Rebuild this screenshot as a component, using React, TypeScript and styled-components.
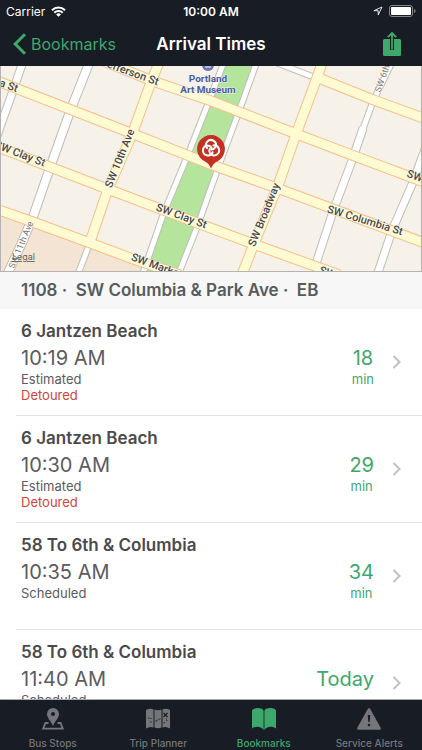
import React from "react";
import styled, { createGlobalStyle } from "styled-components";

const color = {
  bar: "#181c24",
  green: "#3ea76c",
  red: "#d0443c",
  muted: "#757679",
};

const GlobalStyle = createGlobalStyle`
  * { box-sizing: border-box; }
  body { margin: 0; background: #fff; font-family: Inter, "Liberation Sans", sans-serif; }
  h1, h2, p, ul { margin: 0; padding: 0; }
  button { font-family: inherit; }
`;

const Screen = styled.div`
  display: flex;
  flex-direction: column;
  height: 100vh;
  overflow: hidden;
`;

const TopBar = styled.header`
  flex: none;
  background: ${color.bar};
  color: #fff;
`;

const ThreeColumns = styled.div`
  display: grid;
  grid-template-columns: 1fr auto 1fr;
  align-items: center;
`;

const StatusBar = styled(ThreeColumns)`
  height: 22px;
  padding: 0 6px;
  font-size: 12px;
`;

const Cluster = styled.div<{ $end?: boolean }>`
  display: flex;
  align-items: center;
  gap: 6px;
  justify-content: ${(p) => (p.$end ? "flex-end" : "flex-start")};
`;

const Clock = styled.time`
  font-weight: 600;
`;

const NavBar = styled(ThreeColumns)`
  height: 44px;
  padding: 0 12px;
`;

const Title = styled.h1`
  font-size: 17px;
  font-weight: 600;
  line-height: 20px;
`;

const BackLink = styled.a`
  display: flex;
  align-items: center;
  gap: 4px;
  color: ${color.green};
  font-size: 16px;
  line-height: 20px;
  text-decoration: none;
`;

const IconButton = styled.button`
  display: flex;
  justify-self: end;
  padding: 0 9px;
  border: 0;
  background: none;
  color: ${color.green};
`;

const MapPanel = styled.section`
  flex: none;
  height: 206px;
  overflow: hidden;
  background: #f6f1e9;
  border: solid #b5b3b1;
  border-width: 0 1px 1px;

  svg {
    display: block;
    width: 100%;
    height: 100%;
  }
`;

const StreetLabel = styled.text<{ $minor?: boolean }>`
  font-family: Roboto, sans-serif;
  font-size: ${(p) => (p.$minor ? 9 : 11)}px;
  font-weight: ${(p) => (p.$minor ? 400 : 500)};
  fill: ${(p) => (p.$minor ? "#77777b" : "#47474a")};
  stroke: #fffdf0;
  stroke-width: 1px;
  paint-order: stroke;
`;

const PlaceLabel = styled.text`
  font-family: Roboto, sans-serif;
  font-size: 10px;
  font-weight: 700;
  text-anchor: middle;
  fill: #4a5ca8;
  stroke: #f6f1e9;
  stroke-width: 1px;
  paint-order: stroke;
`;

const LegalText = styled.text`
  font-size: 9px;
  fill: #66625d;
  text-decoration: underline;
`;

const StopHeader = styled.h2`
  flex: none;
  padding: 0 21px;
  background: #f7f7f7;
  color: #555b5e;
  font-size: 17px;
  font-weight: 600;
  line-height: 37px;
  white-space: pre;
`;

const ArrivalList = styled.ul`
  flex: 1;
  min-height: 0;
  overflow-y: auto;
  scrollbar-width: none;
  list-style: none;
`;

const ArrivalItem = styled.li`
  margin-left: 16px;
  border-bottom: 1px solid #e3e3e5;
`;

const ArrivalLink = styled.a`
  display: grid;
  grid-template-columns: 1fr auto 10px;
  grid-template-rows: 20px 1fr;
  column-gap: 18px;
  height: 106px;
  padding: 12px 20px 0 5px;
  color: #5b5b60;
  text-decoration: none;
`;

const RouteName = styled.span`
  grid-column: 1 / -1;
  color: #4a4a4c;
  font-size: 17px;
  font-weight: 600;
  line-height: 20px;
`;

const Stack = styled.span<{ $accent?: boolean }>`
  display: flex;
  flex-direction: column;
  padding-top: 5px;
  text-align: ${(p) => (p.$accent ? "center" : "left")};
  color: ${(p) => (p.$accent ? color.green : "inherit")};
`;

const BigText = styled.span`
  font-size: 20px;
  line-height: 25px;
`;

const SmallText = styled.span<{ $alert?: boolean }>`
  font-size: 13px;
  line-height: 16px;
  color: ${(p) => (p.$alert ? color.red : "inherit")};
`;

const Chevron = styled.svg`
  margin-top: 14px;
`;

const TabBar = styled.nav`
  flex: none;
  display: grid;
  grid-template-columns: repeat(4, 1fr);
  height: 51px;
  border-top: 1px solid #a9abae;
  background: ${color.bar};
`;

const Tab = styled.button<{ $active?: boolean }>`
  display: flex;
  flex-direction: column;
  align-items: center;
  gap: 6px;
  padding: 8px 0 0;
  border: 0;
  background: none;
  color: ${(p) => (p.$active ? color.green : color.muted)};
  font-size: 10px;
  font-weight: 500;
  line-height: 14px;
`;

const WifiIcon = () => (
  <svg width="15" height="11" viewBox="0 0 15 11" fill="none" stroke="#fff" strokeWidth="2">
    <path d="M1 4.2a9.3 9.3 0 0 1 13 0M3.3 6.7a6 6 0 0 1 8.4 0" />
    <path d="M7.5 10.8 5.1 8.4a3.4 3.4 0 0 1 4.8 0z" fill="#fff" stroke="none" />
  </svg>
);

const LocationIcon = () => (
  <svg width="10" height="10" viewBox="0 0 10 10" fill="none" stroke="#e8e8e9" strokeLinejoin="round">
    <path d="M9 1 .9 4.7h4.3V9z" />
  </svg>
);

const BatteryIcon = () => (
  <svg width="27" height="12" viewBox="0 0 27 12">
    <rect x=".5" y=".5" width="23" height="11" rx="2.5" fill="none" stroke="#85878b" />
    <rect x="2" y="2" width="20" height="8" rx="1" fill="#fff" />
    <path d="M25 4v4q1.5-.6 1.5-2T25 4" fill="#85878b" />
  </svg>
);

const BackIcon = () => (
  <svg width="15" height="22" viewBox="0 0 15 22" fill="none" stroke="currentColor" strokeWidth="3">
    <path d="M13 1.2 3.2 11 13 20.8" />
  </svg>
);

const ShareIcon = () => (
  <svg width="18" height="24" viewBox="0 0 18 24">
    <rect y="7" width="18" height="17" rx="1.5" fill="currentColor" />
    <path d="M9 7v11" stroke={color.bar} strokeWidth="4" />
    <path d="M9 1v16.5M4.8 5.2 9 1l4.2 4.2" fill="none" stroke="currentColor" strokeWidth="1.8" />
  </svg>
);

const StopIcon = () => (
  <svg width="22" height="22" viewBox="0 0 22 22" fill="currentColor">
    <path fillRule="evenodd" d="M11 0a6 6 0 0 1 6 6c0 4-4 7-6 12C9 13 5 10 5 6a6 6 0 0 1 6-6m0 4a2 2 0 1 0 0 4 2 2 0 0 0 0-4" />
    <path d="M6.5 15H3.4L1.2 20.7h19.6L18.6 15h-3.1" fill="none" stroke="currentColor" strokeWidth="1.8" />
  </svg>
);

const TripIcon = () => (
  <svg width="24" height="22" viewBox="0 0 24 22">
    <path d="M0 2q4-2 7.5-.5v18Q4 18 0 20.5zM8.500 1.500q3.500 1.400 7 0v18q-3.500 1.500-7 0zM16.500 1.500Q20 0 24 2v18.500Q20 18 16.500 19.500z" fill="currentColor" />
    <path d="M2 10h2M4 14h2M5 10v1M9.500 13h2l1-2h2M17.500 15l2-1M21 13l-1-3" fill="none" stroke={color.bar} strokeDasharray="1.500 1" />
    <path d="m17.500 5 4 4M21.500 5l-4 4" stroke={color.bar} strokeWidth="1.200" />
  </svg>
);

const BookIcon = () => (
  <svg width="24" height="22" viewBox="0 0 24 22" fill="currentColor">
    <path d="M0 3C0 0 9-1.500 11.600 2.500V22C9 18 3 18 0 20.500zM24 3C24 0 15-1.500 12.400 2.500V22C15 18 21 18 24 20.500z" />
  </svg>
);

const AlertIcon = () => (
  <svg width="24" height="22" viewBox="0 0 24 22">
    <path d="M12 1.500 22.500 20.500h-21z" fill="currentColor" stroke="currentColor" strokeWidth="2.600" strokeLinejoin="round" />
    <path d="M10.800 7h2.400l-.5 7h-1.400z" fill={color.bar} />
    <circle cx="12" cy="17" r="1.300" fill={color.bar} />
  </svg>
);

const sideStreets = [
  { width: 9, points: "22,-4 12,25 -4,70" },
  { width: 10, points: "89,-4 70,44 50,100 32,152 20,180 6,210" },
  { width: 7, points: "90,176 77,210" },
  { width: 7, points: "224,-4 208,38 187,91 163,149 142,210" },
  { width: 7, points: "257,-4 239,46 220,97 197,162 178,210" },
  { width: 7, points: "275,-4 319,13" },
  { width: 7, points: "393,-4 374,35 363,65" },
  { width: 9, points: "364,62 352,97 334,145 315,203" },
  { width: 9, points: "426,84 413,119 393,165 378,210" },
];

const mainStreets = [
  "-4,15 132,68 211,99 281,124 426,178",
  "98,-7 152,15 211,35 296,68 354,90 426,117",
  "319,12 374,34 426,53",
  "-4,81 108,124 211,163 254,179 340,210",
  "-4,144 30,156 90,178 133,194 180,210",
  "159,-4 150,18 132,68 107,125 89,178",
  "323,-4 317,13 297,67 278,121 254,179 242,210",
];

const streetLabels = [
  { x: 100, y: -1, angle: 20, text: "Jefferson St" },
  { x: -5, y: 19, angle: 20, text: "ia St" },
  { x: -7, y: 82, angle: 21, text: "SW Clay St" },
  { x: 155, y: 145, angle: 20, text: "SW Clay St" },
  { x: 130, y: 195, angle: 20, text: "SW Market St" },
  { x: 327, y: 147, angle: 17, text: "SW Columbia St" },
  { x: 407, y: 111, angle: 20, text: "SW Jefferson St" },
  { x: 319, y: 208, angle: 20, text: "SW Clay St" },
  { x: 111, y: 123, angle: -68, text: "SW 10th Ave" },
  { x: 255, y: 182, angle: -68, text: "SW Broadway" },
  { x: 381, y: 27, angle: -70, text: "SW 6th", minor: true },
  { x: 13, y: 204, angle: -67, text: "SW 11th Ave", minor: true },
];

const StreetMap = () => (
  <svg viewBox="0 0 422 206" preserveAspectRatio="xMidYMid slice" role="img" aria-label="Stop location">
    <path d="M-2 144 90 178 180 212H-2z" fill="#f3e4d3" />
    <path d="M224-4h33L178 210h-36z" fill="#b5e49d" />
    <g fill="none" strokeLinejoin="round">
      {sideStreets.map((s) => <polyline key={s.points} points={s.points} stroke="#bfbdba" strokeWidth={s.width} />)}
      {sideStreets.map((s) => <polyline key={s.points} points={s.points} stroke="#fff" strokeWidth={s.width - 2} />)}
      {mainStreets.map((p) => <polyline key={p} points={p} stroke="#f3c08a" strokeWidth="11" />)}
      {mainStreets.map((p) => <polyline key={p} points={p} stroke="#fefad2" strokeWidth="9" />)}
    </g>
    {streetLabels.map((l) => (
      <StreetLabel key={`${l.x}-${l.y}`} $minor={l.minor} transform={`translate(${l.x} ${l.y}) rotate(${l.angle})`}>
        {l.text}
      </StreetLabel>
    ))}
    <circle cx="208" cy="-1" r="6" fill="#6775b6" />
    <path d="M205 1h6" stroke="#fff" />
    <PlaceLabel x="208" y="16">Portland</PlaceLabel>
    <PlaceLabel x="208" y="27">Art Museum</PlaceLabel>
    <LegalText x="11" y="195">Legal</LegalText>
    <path d="M211 103q-2-5-6-7A14 14 0 1 1 217 96q-4 2-6 7" fill="#c43022" />
    <g fill="none" stroke="#fff" strokeWidth="2" strokeLinecap="round">
      {[0, 120, 240].map((angle) => (
        <path key={angle} d="M207 82.500A5 5 0 1 1 215.500 81.500Q214 84 211.500 84" transform={`rotate(${angle} 211 83)`} />
      ))}
    </g>
  </svg>
);

const arrivals = [
  { route: "6 Jantzen Beach", time: "10:19 AM", status: "Estimated", detoured: true, wait: "18", unit: "min" },
  { route: "6 Jantzen Beach", time: "10:30 AM", status: "Estimated", detoured: true, wait: "29", unit: "min" },
  { route: "58 To 6th & Columbia", time: "10:35 AM", status: "Scheduled", wait: "34", unit: "min" },
  { route: "58 To 6th & Columbia", time: "11:40 AM", status: "Scheduled", wait: "Today" },
];

const tabs = [
  { label: "Bus Stops", Icon: StopIcon },
  { label: "Trip Planner", Icon: TripIcon },
  { label: "Bookmarks", Icon: BookIcon, active: true },
  { label: "Service Alerts", Icon: AlertIcon },
];

export default function App() {
  return (
    <Screen>
      <GlobalStyle />
      <TopBar>
        <StatusBar>
          <Cluster>Carrier <WifiIcon /></Cluster>
          <Clock>10:00 AM</Clock>
          <Cluster $end><LocationIcon /><BatteryIcon /></Cluster>
        </StatusBar>
        <NavBar>
          <BackLink href="#bookmarks"><BackIcon />Bookmarks</BackLink>
          <Title>Arrival Times</Title>
          <IconButton aria-label="Share"><ShareIcon /></IconButton>
        </NavBar>
      </TopBar>
      <MapPanel><StreetMap /></MapPanel>
      <StopHeader>{"1108 ·  SW Columbia & Park Ave ·  EB"}</StopHeader>
      <ArrivalList>
        {arrivals.map((a) => (
          <ArrivalItem key={a.time}>
            <ArrivalLink href="#arrival">
              <RouteName>{a.route}</RouteName>
              <Stack>
                <BigText>{a.time}</BigText>
                <SmallText>{a.status}</SmallText>
                {a.detoured && <SmallText $alert>Detoured</SmallText>}
              </Stack>
              <Stack $accent>
                <BigText>{a.wait}</BigText>
                {a.unit && <SmallText>{a.unit}</SmallText>}
              </Stack>
              <Chevron width="10" height="14" viewBox="0 0 10 14" fill="none" stroke="#c0c0c5" strokeWidth="2">
                <path d="m1.500 1 6 6-6 6" />
              </Chevron>
            </ArrivalLink>
          </ArrivalItem>
        ))}
      </ArrivalList>
      <TabBar>
        {tabs.map(({ label, Icon, active }) => (
          <Tab key={label} $active={active} aria-current={active ? "page" : undefined}>
            <Icon />{label}
          </Tab>
        ))}
      </TabBar>
    </Screen>
  );
}
